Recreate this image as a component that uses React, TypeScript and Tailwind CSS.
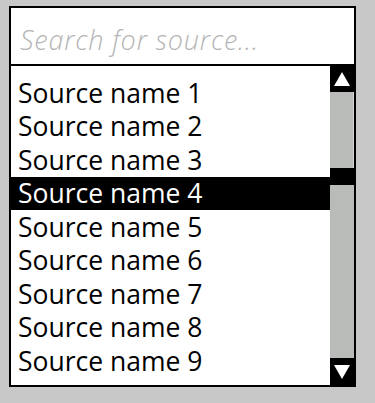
import React from "react";

const items = Array.from({ length: 9 }, (_, i) => `Source name ${i + 1}`);

export default function App() {
  return (
    <div className="w-[375px] h-[403px] bg-[#c8c8c8] pl-[9px] pt-[6px]" style={{ fontFamily: "'Open Sans', 'Noto Sans', sans-serif" }}>
      <div className="w-[347px] h-[381px] border-2 border-black bg-white flex flex-col">
        <div className="h-[58px] border-b-2 border-black flex items-center pl-[9px] pt-[9px]">
          <span className="text-[27px] italic font-light tracking-[0.8px] text-[#b4b4b4]">Search for source...</span>
        </div>
        <div className="flex-1 flex min-h-0">
          <div className="flex-1 pt-[10px]">
            {items.map((t, i) => (
              <div
                key={t}
                className={`h-[33.5px] flex items-center pl-[7px] text-[26.5px] leading-none ${i === 3 ? "bg-black text-white" : "text-black"}`}
              >
                {t}
              </div>
            ))}
          </div>
          <div className="w-[24px] flex flex-col bg-[#b9bbb9]">
            <div className="h-[26px] bg-black flex items-center justify-center">
              <svg width="16" height="14" viewBox="0 0 16 14"><polygon points="8,0 16,14 0,14" fill="white" /></svg>
            </div>
            <div className="h-[76px] border-r border-[#d8d8d8]" />
            <div className="h-[17px] bg-black" />
            <div className="flex-1" />
            <div className="h-[27px] bg-black flex items-center justify-center">
              <svg width="16" height="14" viewBox="0 0 16 14"><polygon points="0,0 16,0 8,14" fill="white" /></svg>
            </div>
          </div>
        </div>
      </div>
    </div>
  );
}
